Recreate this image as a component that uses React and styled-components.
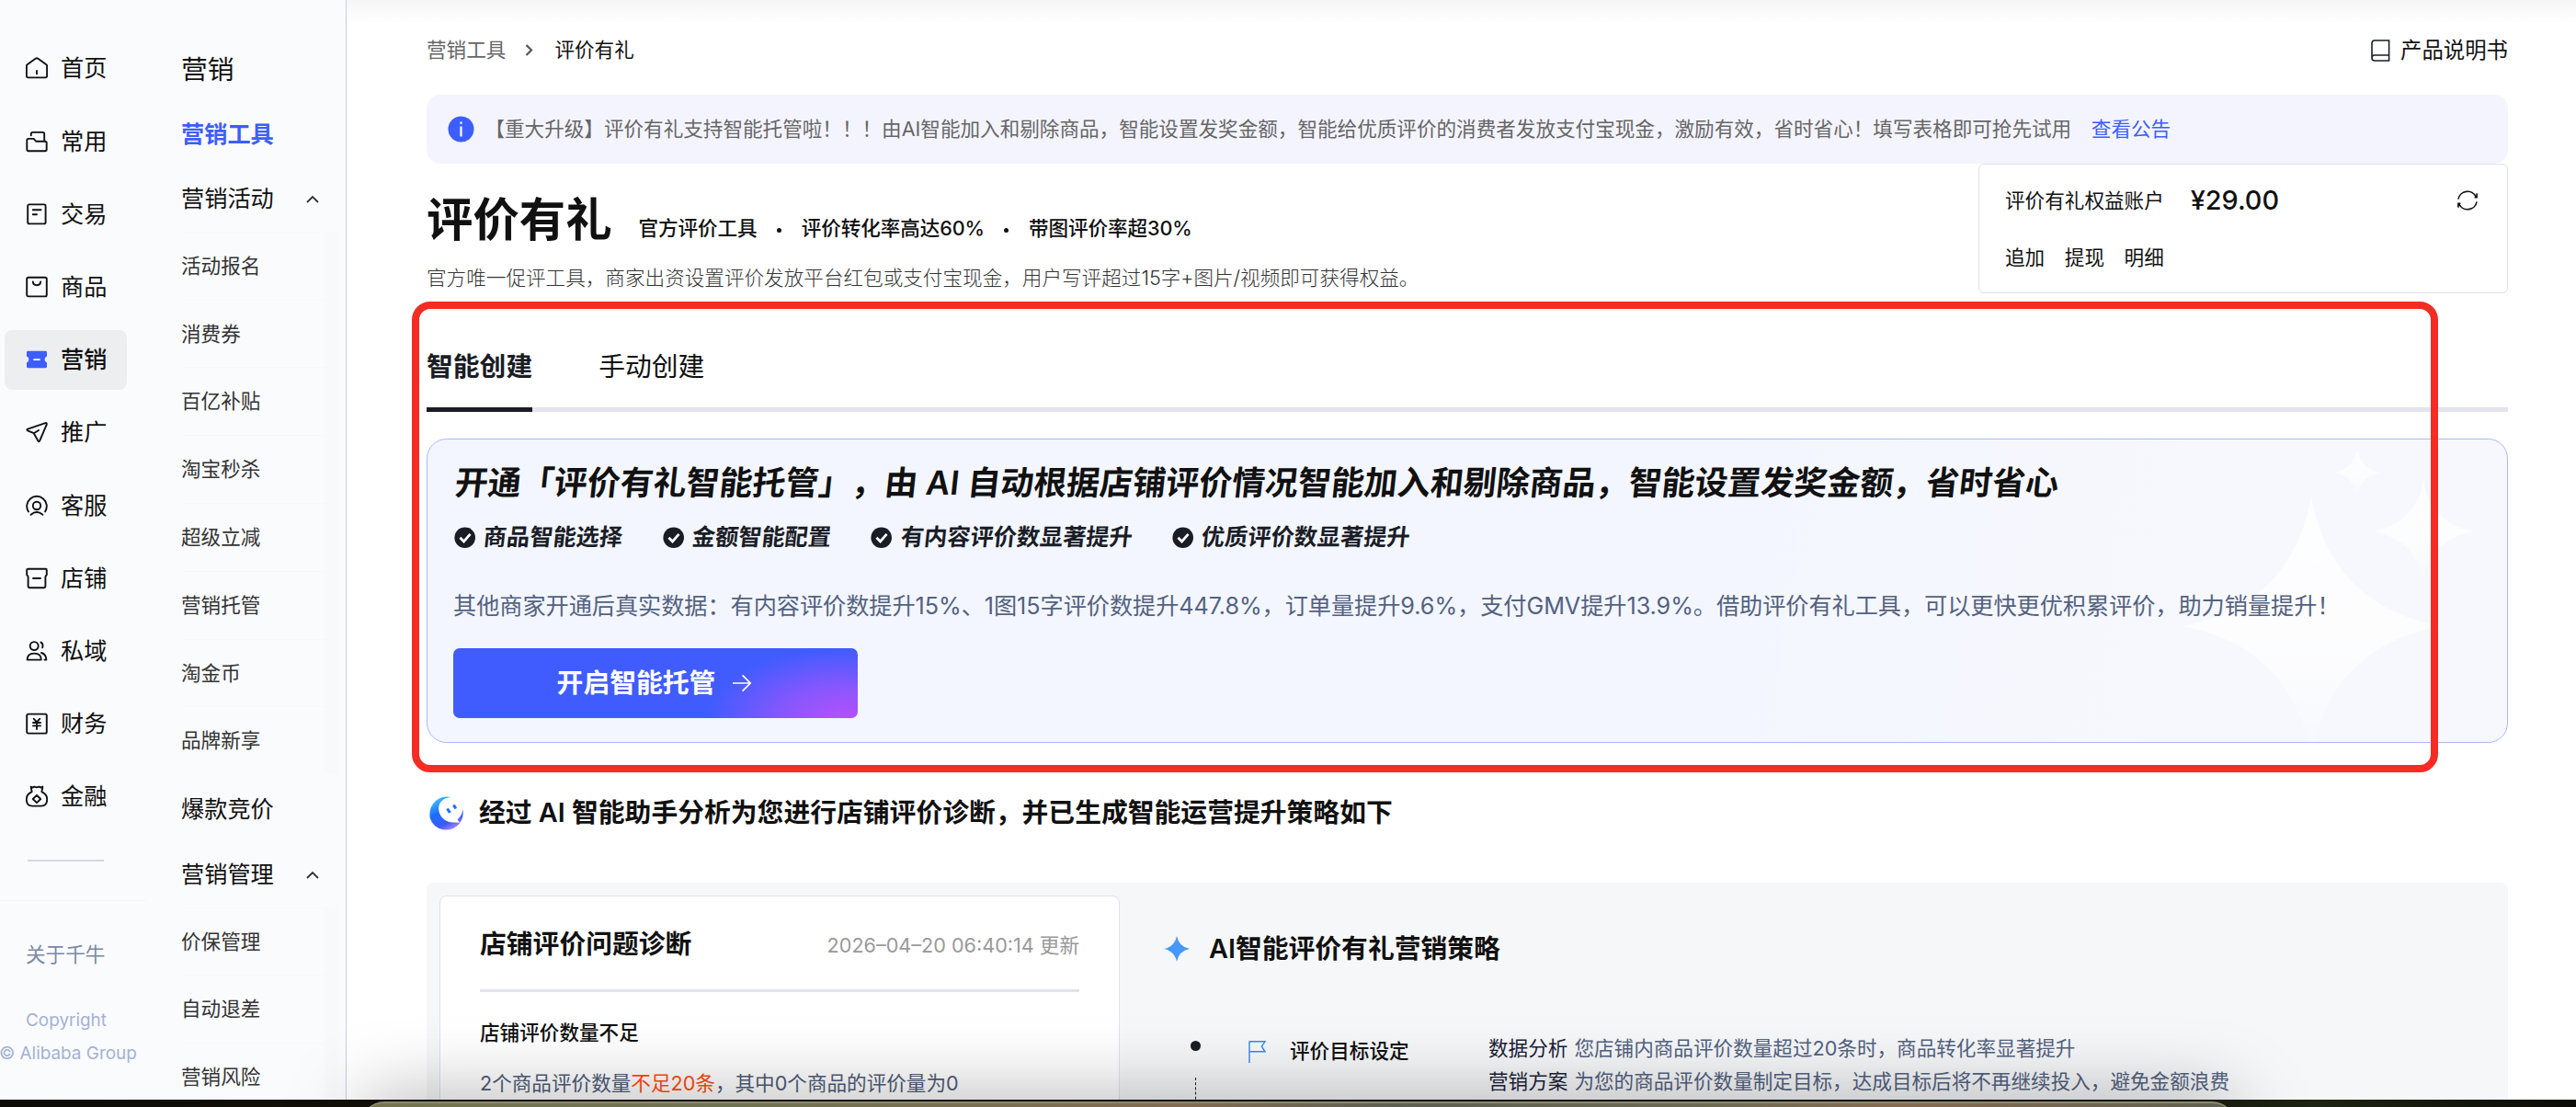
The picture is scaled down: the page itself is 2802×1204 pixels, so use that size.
import React from "react"
import styled, { createGlobalStyle, css } from "styled-components"

const colors = {
  ink: "#111111",
  navy: "#1a1d26",
  text: "#333333",
  grey: "#666666",
  slate: "#53627f",
  blue: "#3d5eff",
  line: "#e3e4ed",
  red: "#f42c24",
  orange: "#ff4d0f",
}

const fontSizes = {
  xs: "21.6px",
  s: "23.4px",
  m: "25.2px",
  l: "28.8px",
  xl: "36px",
  xxl: "50.4px",
}

const GlobalStyle = createGlobalStyle`
  * {
    box-sizing: border-box;
  }
  body {
    margin: 0;
    overflow: hidden;
    font-family: "Inter", "Noto Sans CJK SC", sans-serif;
    line-height: 1.4;
    color: ${colors.ink};
    background: #fff;
  }
  svg {
    display: block;
    flex: none;
  }
`

const Screen = styled.div`
  position: relative;
  width: 2802px;
  height: 1204px;
  overflow: hidden;
  background: linear-gradient(90deg, #0c0b06, #1a150b 30%, #0f0f0a 70%, #1d2413 90%, #0c0b06);
`

const Window = styled.div`
  display: flex;
  height: 1196px;
  overflow: hidden;
  background: #fff;
  white-space: nowrap;
`

/* first level menu */

const MainMenu = styled.nav`
  width: 159px;
  flex: none;
  display: flex;
  flex-direction: column;
  background: #fafbfd;
  padding-top: 42px;
`

const MainItem = styled.div`
  display: flex;
  align-items: center;
  flex: none;
  height: 64.8px;
  width: 133px;
  margin: 0 0 14.4px 5px;
  padding-left: 23.4px;
  gap: 13.6px;
  border-radius: 8px;
  font-size: ${fontSizes.m};
  line-height: 36px;
  ${({ $active }) => $active && css`
    background: #edeef0;
    font-weight: 500;
  `};
`

const MenuDivider = styled.div`
  flex: none;
  width: 83px;
  height: 2px;
  margin: 22px 0 0 30px;
  background: #d5d8e3;
`

const MenuFooter = styled.div`
  margin-top: 42px;
  padding-top: 40px;
  flex: 1;
  border-top: 1px solid #f5f6fa;
  text-align: center;
  line-height: 36px;
`

const About = styled.div`
  padding-left: 28px;
  text-align: left;
  font-size: ${fontSizes.xs};
  color: #7a88a6;
`

const Copyright = styled.div`
  width: 146px;
  margin: 36px 0 0 -1px;
  font-size: 18.9px;
  color: #a3b2d4;
`

/* second level menu */

const SubMenu = styled.nav`
  width: 218px;
  flex: none;
  background: #fafbfd;
  border-right: 1px solid #c6d0dd;
  padding: 40px 0 0 38px;
`

const SubTitle = styled.div`
  height: 71px;
  font-size: ${fontSizes.l};
  line-height: 71px;
`

const Group = styled.div`
  display: flex;
  align-items: center;
  justify-content: space-between;
  height: 70.4px;
  padding-right: 29px;
  font-size: ${fontSizes.m};
  color: ${({ $active }) => ($active ? colors.blue : colors.ink)};
  font-weight: ${({ $active }) => ($active ? 600 : 400)};
`

const Children = styled.div`
  width: 170px;
  margin-bottom: 3.6px;
  border-right: 14px solid #f8f9fb;
`

const Child = styled.div`
  height: 73.8px;
  line-height: 73.8px;
  border-top: 1px solid #f7f8fb;
  font-size: ${fontSizes.xs};
  color: ${colors.text};
`

/* page */

const Page = styled.main`
  flex: 1;
  min-width: 0;
  padding: 0 74px 0 87px;
  background: linear-gradient(#f6f6f6, #ffffff 26px);
`

const TopBar = styled.div`
  display: flex;
  align-items: center;
  justify-content: space-between;
  height: 103px;
  padding-top: 6px;
`

const Crumbs = styled.div`
  display: flex;
  align-items: center;
  font-size: ${fontSizes.xs};
  span:first-child {
    color: ${colors.grey};
  }
  svg {
    margin: 0 23px 0 21px;
  }
`

const Manual = styled.div`
  display: flex;
  align-items: center;
  gap: 10.6px;
  padding-top: 2px;
  font-size: ${fontSizes.s};
`

const Notice = styled.div`
  display: flex;
  align-items: center;
  height: 75px;
  padding-left: 23px;
  border-radius: 15px;
  background: #f4f4ff;
  color: ${colors.grey};
  font-size: ${fontSizes.xs};
`

const NoticeText = styled.span`
  margin-left: 11.4px;
  letter-spacing: -0.01px;
`

const NoticeLink = styled.a`
  margin-left: 21.6px;
  color: ${colors.blue};
`

const Header = styled.div`
  display: flex;
  justify-content: space-between;
  height: 150px;
`

const HeaderText = styled.div`
  padding-top: 25px;
`

const TitleRow = styled.div`
  display: flex;
  align-items: center;
  height: 72px;
`

const Title = styled.h1`
  margin: 0;
  font-size: ${fontSizes.xxl};
  font-weight: 600;
  line-height: 72px;
`

const Points = styled.div`
  display: flex;
  align-items: center;
  margin: 19px 0 0 29px;
  font-size: ${fontSizes.xs};
  font-weight: 500;
  letter-spacing: -0.1px;
`

const Point = styled.span`
  & + &::before {
    content: "";
    display: inline-block;
    width: 5px;
    height: 5px;
    margin: 0 21.6px;
    border-radius: 50%;
    background: ${colors.ink};
    vertical-align: middle;
  }
`

const Intro = styled.p`
  margin: 9px 0 0;
  font-size: ${fontSizes.xs};
  font-weight: 300;
  line-height: 36px;
  color: ${colors.text};
`

const Account = styled.div`
  width: 576px;
  height: 141px;
  padding: 17px 32px 0 28px;
  border: 1px solid #dfe0ee;
  border-radius: 6px;
  background: #fff;
`

const AccountRow = styled.div`
  display: flex;
  align-items: center;
  height: 44px;
  font-size: ${fontSizes.xs};
  svg {
    margin-left: auto;
  }
`

const Amount = styled.span`
  margin-left: 29px;
  font-size: ${fontSizes.l};
  font-weight: 500;
`

const AccountLinks = styled.div`
  display: flex;
  gap: 21.6px;
  margin-top: 18px;
  line-height: 44px;
  font-size: ${fontSizes.xs};
`

const Tabs = styled.div`
  display: flex;
  gap: 72px;
  height: 120px;
  border-bottom: 5px solid ${colors.line};
`

const Tab = styled.div`
  height: 120px;
  padding-top: 45px;
  font-size: ${fontSizes.l};
  line-height: 52px;
  ${({ $active }) => $active && css`
    font-weight: 600;
    color: ${colors.navy};
    border-bottom: 5px solid ${colors.navy};
  `};
`

/* smart hosting banner */

const Promo = styled.section`
  position: relative;
  height: 331px;
  margin-top: 29px;
  padding: 18px 0 0 28px;
  border: 1px solid #a9b8fb;
  border-radius: 21.6px;
  background: linear-gradient(100deg, #f3f6ff 60%, #f7f8fd 84%);
`

const Sparkles = styled.svg`
  position: absolute;
  top: 0;
  right: 0;
`

const Slanted = styled.div`
  display: flex;
  width: max-content;
  transform: skewX(-6deg);
`

const PromoTitle = styled(Slanted)`
  padding-left: 2px;
  font-size: ${fontSizes.xl};
  font-weight: 600;
  line-height: 58px;
  letter-spacing: -0.04px;
  white-space: pre;
  text-spacing-trim: space-all;
`

const Benefits = styled.div`
  display: flex;
  gap: 43.2px;
  margin-top: 11px;
  padding-left: 1px;
  height: 40px;
`

const Benefit = styled.div`
  display: flex;
  align-items: center;
  gap: 9px;
  font-size: ${fontSizes.m};
  font-weight: 600;
  color: ${colors.navy};
`

const PromoData = styled.p`
  position: relative;
  margin: 34px 0 0;
  font-size: ${fontSizes.m};
  line-height: 40px;
  letter-spacing: -0.06px;
  color: ${colors.slate};
`

const HostButton = styled.button`
  display: flex;
  align-items: center;
  justify-content: center;
  gap: 18px;
  width: 440px;
  height: 76px;
  margin-top: 26px;
  padding: 0 2px 0 0;
  border: 0;
  border-radius: 7px;
  font: 600 ${fontSizes.l}/40px "Inter", "Noto Sans CJK SC", sans-serif;
  color: #fff;
  background: radial-gradient(ellipse 150px 76px at 97% 100%, #b650fb, #8857fd 45%, rgba(64, 92, 255, 0)), #405cff;
`

/* diagnosis */

const Assistant = styled.div`
  display: flex;
  align-items: center;
  gap: 17px;
  height: 152px;
  padding-left: 3px;
  font-size: ${fontSizes.l};
  font-weight: 600;
`

const Report = styled.section`
  display: flex;
  align-items: flex-start;
  height: 300px;
  padding: 14px 0 0 14px;
  border-radius: 8px;
  background: #f6f7f9;
`

const Diagnosis = styled.div`
  width: 740px;
  height: 300px;
  flex: none;
  padding: 30px 43px 0;
  border: 1px solid #e1e2ec;
  border-radius: 8px;
  background: #fff;
`

const DiagnosisHead = styled.div`
  display: flex;
  align-items: center;
  justify-content: space-between;
  height: 74px;
  padding-bottom: 28px;
  border-bottom: 3px solid #e2e2ec;
`

const BlockTitle = styled.h2`
  margin: 0;
  font-size: ${fontSizes.l};
  font-weight: 600;
  line-height: 44px;
`

const Updated = styled.span`
  padding-top: 3px;
  font-size: ${fontSizes.xs};
  color: #999;
`

const IssueTitle = styled.div`
  margin-top: 25px;
  font-size: ${fontSizes.xs};
  font-weight: 500;
  line-height: 38px;
`

const Issue = styled.div`
  margin-top: 17px;
  font-size: ${fontSizes.xs};
  line-height: 38px;
  color: #4f5d78;
  em {
    font-style: normal;
    color: ${colors.orange};
  }
`

const Strategy = styled.div`
  padding: 36px 0 0 48px;
`

const StrategyHead = styled.div`
  display: flex;
  align-items: center;
  gap: 21px;
  height: 44px;
`

const Step = styled.div`
  display: flex;
  align-items: flex-start;
  margin-top: 68px;
  padding-left: 29px;
`

const Track = styled.div`
  display: flex;
  flex-direction: column;
  align-items: center;
  width: 11px;
  padding-top: 10px;
  &::before {
    content: "";
    width: 11px;
    height: 11px;
    border-radius: 50%;
    background: ${colors.navy};
  }
  &::after {
    content: "";
    height: 60px;
    margin-top: 29px;
    border-left: 1px dashed ${colors.navy};
  }
`

const StepName = styled.div`
  display: flex;
  align-items: center;
  gap: 26px;
  width: 261px;
  height: 38px;
  margin: 2px 0 0 52px;
  font-size: ${fontSizes.xs};
  font-weight: 500;
`

const StepDetail = styled.div`
  font-size: ${fontSizes.xs};
  line-height: 36px;
  color: ${colors.slate};
  span {
    margin-right: 7px;
    color: #1a2138;
  }
`

/* things drawn over the page */

const Highlight = styled.div`
  position: absolute;
  left: 448px;
  top: 328px;
  width: 2204px;
  height: 512px;
  border: 8px solid ${colors.red};
  border-radius: 20px;
`

const Dock = styled.div`
  position: absolute;
  left: 392px;
  top: 1198px;
  width: 2040px;
  height: 60px;
  border-top: 2px solid #8b8a6c;
  border-radius: 26px;
  background: linear-gradient(90deg, #75744f, #6f7250 20%, #836b50 44%, #5e6052 55%, #6d6a52 72%, #876b50 82%, #5e604f);
  box-shadow: 0 0 84px rgba(0, 0, 0, 0.36);
`

const MenuIcon = ({ children }) => (
  <svg
    width="24"
    height="24"
    viewBox="0 0 24 24"
    fill="none"
    stroke={colors.ink}
    strokeWidth="1.9"
    strokeLinecap="round"
    strokeLinejoin="round"
  >
    {children}
  </svg>
)

const mainMenu = [
  {
    name: "首页",
    icon: <path d="M10.6 1.7 1.6 8.3Q.9 8.9.9 9.8V20.6Q.9 22.4 2.7 22.4H21.3Q23.1 22.4 23.1 20.6V9.8Q23.1 8.9 22.4 8.3L13.4 1.7Q12 .7 10.6 1.7ZM12 15V18.4" />,
  },
  {
    name: "常用",
    icon: (
      <>
        <path d="M5.8 5.2V3.6Q5.8 1.9 7.5 1.9H18.4Q20.2 1.9 20.2 3.6V11" />
        <path d="M1.3 10.6Q1.3 8.9 3 8.9H8.6L11.4 11.8H21Q22.7 11.8 22.7 13.5V20.6Q22.7 22.3 21 22.3H3Q1.3 22.3 1.3 20.6Z" />
      </>
    ),
  },
  {
    name: "交易",
    icon: (
      <>
        <rect x="2.2" y="1.4" width="19.4" height="21" rx="1.6" />
        <path d="M7.8 7.2H16.6M7.8 12.2H12" />
      </>
    ),
  },
  {
    name: "商品",
    icon: (
      <>
        <rect x="1.2" y="1.8" width="21.6" height="20.6" rx="1.6" />
        <path d="M7.8 6.4Q8.2 10.2 12 10.2T16.2 6.4" />
      </>
    ),
  },
  {
    name: "营销",
    icon: (
      <>
        <path
          d="M2.4 2.8H21.6Q23 2.8 23 4.2V8.6Q20.6 9.6 20.6 12T23 15.4V19.8Q23 21.2 21.6 21.2H2.4Q1 21.2 1 19.8V15.4Q3.4 14.4 3.4 12T1 8.6V4.2Q1 2.8 2.4 2.8Z"
          fill={colors.blue}
          stroke="none"
        />
        <path d="M9 12.1H15" stroke="#fff" />
      </>
    ),
  },
  {
    name: "推广",
    icon: <path d="M21.3 2.1 2.2 8.6Q.6 9.4 2 10.3L8.8 13.2 13.4 21.6Q14.5 23 15.2 21.4L22.8 3.6Q23.1 1.7 21.3 2.1ZM8.8 13.2 14 10" />,
  },
  {
    name: "客服",
    icon: (
      <>
        <path d="M2.9 18.4A10.8 10.8 0 1 1 21.1 18.4" />
        <circle cx="12" cy="12" r="4.2" />
        <path d="M5.6 21.8Q12 16.4 18.4 21.8" />
      </>
    ),
  },
  {
    name: "店铺",
    icon: <path d="M2.4 1.8H21.6Q22.8 1.8 22.8 3V8.2L21.4 10V20.8Q21.4 22.2 20 22.2H4Q2.6 22.2 2.6 20.8V10L1.2 8.2V3Q1.2 1.8 2.4 1.8ZM8 12H16" />,
  },
  {
    name: "私域",
    icon: (
      <>
        <circle cx="9.2" cy="6.6" r="4.5" />
        <path d="M1.6 21.6Q1.6 14.6 9.2 14.6T16.8 21.6ZM16.4 2.6Q19.4 4 18.2 8.4M17 14Q22.2 15.4 22.4 21.6H20.4" />
      </>
    ),
  },
  {
    name: "财务",
    icon: (
      <>
        <rect x="1.2" y="1.6" width="21.6" height="21" rx="1.6" />
        <path d="M8.8 6.8 12 10.4 15.2 6.8M8 11H16M8 14.4H16M12 10.4V18" />
      </>
    ),
  },
  {
    name: "金融",
    icon: (
      <>
        <path d="M5.6 1.6 7.4 2.6 9.4 1.6 12 2.4 14.6 1.6 16.6 2.6 18.4 1.6 17.4 7.2Q23.2 10 23.2 15.4 23.2 22.6 17 22.6H7Q.8 22.6.8 15.4.8 10 6.6 7.2Z" />
        <path d="M12 10.8 16.2 15 12 19.2 7.8 15Z" />
      </>
    ),
  },
]

const activities = ["活动报名", "消费券", "百亿补贴", "淘宝秒杀", "超级立减", "营销托管", "淘金币", "品牌新享"]
const management = ["价保管理", "自动退差", "营销风险"]
const benefits = ["商品智能选择", "金额智能配置", "有内容评价数显著提升", "优质评价数显著提升"]

const Chevron = () => (
  <svg width="14" height="9" viewBox="0 0 14 9" fill="none" stroke="#333" strokeWidth="1.8">
    <path d="M1 8 7 2 13 8" />
  </svg>
)

const Check = () => (
  <svg width="23.4" height="23.4" viewBox="0 0 24 24">
    <circle cx="12" cy="12" r="11.6" fill={colors.navy} />
    <path d="M6.6 12 10.8 16.4 18 8" fill="none" stroke="#fff" strokeWidth="2.8" />
  </svg>
)

const star = (x, y, r) => {
  const k = r * 0.16
  return `M${x} ${y - r}Q${x + k} ${y - k} ${x + r} ${y}Q${x + k} ${y + k} ${x} ${y + r}Q${x - k} ${y + k} ${x - r} ${y}Q${x - k} ${y - k} ${x} ${y - r}Z`
}

const App = () => {
  return (
    <>
      <GlobalStyle />
      <Screen>
        <Window>
          <MainMenu>
            {mainMenu.map(({ name, icon }) => (
              <MainItem key={name} $active={name === "营销"}>
                <MenuIcon>{icon}</MenuIcon>
                {name}
              </MainItem>
            ))}
            <MenuDivider />
            <MenuFooter>
              <About>关于千牛</About>
              <Copyright>
                Copyright
                <br />© Alibaba Group
              </Copyright>
            </MenuFooter>
          </MainMenu>

          <SubMenu>
            <SubTitle>营销</SubTitle>
            <Group $active>营销工具</Group>
            <Group>
              营销活动
              <Chevron />
            </Group>
            <Children>
              {activities.map(name => (
                <Child key={name}>{name}</Child>
              ))}
            </Children>
            <Group>爆款竞价</Group>
            <Group>
              营销管理
              <Chevron />
            </Group>
            <Children>
              {management.map(name => (
                <Child key={name}>{name}</Child>
              ))}
            </Children>
          </SubMenu>

          <Page>
            <TopBar>
              <Crumbs>
                <span>营销工具</span>
                <svg width="9" height="13" viewBox="0 0 9 13" fill="none" stroke="#555" strokeWidth="2.2">
                  <path d="M1.5 1 7 6.5 1.5 12" />
                </svg>
                <span>评价有礼</span>
              </Crumbs>
              <Manual>
                <svg width="21" height="24" viewBox="0 0 21 24" fill="none" stroke={colors.navy} strokeWidth="1.6">
                  <path d="M4 1H19.6V23H4Q1 23 1 20V4Q1 1 4 1ZM1 20Q1 17 4 17H19.6" />
                </svg>
                产品说明书
              </Manual>
            </TopBar>

            <Notice>
              <svg width="29" height="29" viewBox="0 0 29 29">
                <circle cx="14.5" cy="14.5" r="14" fill={colors.blue} />
                <path d="M14.5 6.4V8.8M14.5 11.6V22.4" stroke="#fff" strokeWidth="2.2" />
              </svg>
              <NoticeText>
                【重大升级】评价有礼支持智能托管啦！！！由AI智能加入和剔除商品，智能设置发奖金额，智能给优质评价的消费者发放支付宝现金，激励有效，省时省心！填写表格即可抢先试用
              </NoticeText>
              <NoticeLink>查看公告</NoticeLink>
            </Notice>

            <Header>
              <HeaderText>
                <TitleRow>
                  <Title>评价有礼</Title>
                  <Points>
                    <Point>官方评价工具</Point>
                    <Point>评价转化率高达60%</Point>
                    <Point>带图评价率超30%</Point>
                  </Points>
                </TitleRow>
                <Intro>官方唯一促评工具，商家出资设置评价发放平台红包或支付宝现金，用户写评超过15字+图片/视频即可获得权益。</Intro>
              </HeaderText>
              <Account>
                <AccountRow>
                  评价有礼权益账户
                  <Amount>¥29.00</Amount>
                  <svg width="22" height="24" viewBox="0 0 22 24" fill="none" stroke={colors.ink} strokeWidth="1.6">
                    <path d="M.9 10.6A10.2 10.2 0 0 1 20.2 8.2M21.1 13.4A10.2 10.2 0 0 1 1.8 15.8M21.1 4.2V8.8H18.6M.9 19.8V15.2H3.4" />
                  </svg>
                </AccountRow>
                <AccountLinks>
                  <span>追加</span>
                  <span>提现</span>
                  <span>明细</span>
                </AccountLinks>
              </Account>
            </Header>

            <Tabs>
              <Tab $active>智能创建</Tab>
              <Tab>手动创建</Tab>
            </Tabs>

            <Promo>
              <Sparkles width="420" height="329" viewBox="0 0 420 329">
                <defs>
                  <linearGradient id="glow" x1="0" y1="0" x2="0" y2="1">
                    <stop offset="0" stopColor="#fff" stopOpacity=".85" />
                    <stop offset=".6" stopColor="#fff" stopOpacity=".7" />
                    <stop offset="1" stopColor="#fff" stopOpacity="0" />
                  </linearGradient>
                </defs>
                <path d={star(207, 203, 140)} fill="url(#glow)" />
                <path d={star(329, 100, 54)} fill="url(#glow)" />
                <path d={star(257, 36, 25)} fill="url(#glow)" />
              </Sparkles>
              <PromoTitle>开通「评价有礼智能托管」，由 AI 自动根据店铺评价情况智能加入和剔除商品，智能设置发奖金额，省时省心</PromoTitle>
              <Benefits>
                {benefits.map(text => (
                  <Benefit key={text}>
                    <Check />
                    <Slanted>{text}</Slanted>
                  </Benefit>
                ))}
              </Benefits>
              <PromoData>
                其他商家开通后真实数据：有内容评价数提升15%、1图15字评价数提升447.8%，订单量提升9.6%，支付GMV提升13.9%。借助评价有礼工具，可以更快更优积累评价，助力销量提升！
              </PromoData>
              <HostButton>
                开启智能托管
                <svg width="22" height="20" viewBox="0 0 22 20" fill="none" stroke="#fff" strokeWidth="1.7">
                  <path d="M1 10H20M11.6 1.4 20.2 10 11.6 18.6" />
                </svg>
              </HostButton>
            </Promo>

            <Assistant>
              <svg width="37" height="37" viewBox="0 0 37 37">
                <defs>
                  <linearGradient id="moon" x1=".25" y1="0" x2=".75" y2="1">
                    <stop offset="0" stopColor="#43c3ff" />
                    <stop offset=".4" stopColor="#1f6dff" />
                    <stop offset=".75" stopColor="#3a5bff" />
                    <stop offset="1" stopColor="#c08cff" />
                  </linearGradient>
                </defs>
                <path
                  d="M24 1.2C15 .8 9.6 7.4 10.2 14.4 10.8 22.6 18 28.6 26.6 28.4L33 28.8 30.6 25.4Q35.6 21.2 36.4 14.6 38 24 31.6 31 24.8 38 14.6 36.2 4 33.8.8 24-1.4 12.6 7.2 4.8 15-1.4 24 1.2Z"
                  fill="url(#moon)"
                />
                <path d="M19.4 13.6 22.6 17.8M26.4 9.4 28.8 13.6" stroke="#1f6dff" strokeWidth="3" />
              </svg>
              经过 AI 智能助手分析为您进行店铺评价诊断，并已生成智能运营提升策略如下
            </Assistant>

            <Report>
              <Diagnosis>
                <DiagnosisHead>
                  <BlockTitle>店铺评价问题诊断</BlockTitle>
                  <Updated>2026–04–20 06:40:14 更新</Updated>
                </DiagnosisHead>
                <IssueTitle>店铺评价数量不足</IssueTitle>
                <Issue>
                  2个商品评价数量<em>不足20条</em>，其中0个商品的评价量为0
                </Issue>
              </Diagnosis>
              <Strategy>
                <StrategyHead>
                  <svg width="28" height="28" viewBox="0 0 28 28">
                    <path d={star(14, 14, 14)} fill="#4898fb" />
                  </svg>
                  <BlockTitle>AI智能评价有礼营销策略</BlockTitle>
                </StrategyHead>
                <Step>
                  <Track />
                  <StepName>
                    <svg width="19" height="25" viewBox="0 0 19 25" fill="none" stroke="#2e8cf5" strokeWidth="1.4">
                      <path d="M1 25V1.6M1 1.8H18L14.4 7.2 18 12.8H1" />
                    </svg>
                    评价目标设定
                  </StepName>
                  <StepDetail>
                    <div>
                      <span>数据分析</span>您店铺内商品评价数量超过20条时，商品转化率显著提升
                    </div>
                    <div>
                      <span>营销方案</span>为您的商品评价数量制定目标，达成目标后将不再继续投入，避免金额浪费
                    </div>
                  </StepDetail>
                </Step>
              </Strategy>
            </Report>
          </Page>
        </Window>
        <Highlight />
        <Dock />
      </Screen>
    </>
  )
}

export default App
